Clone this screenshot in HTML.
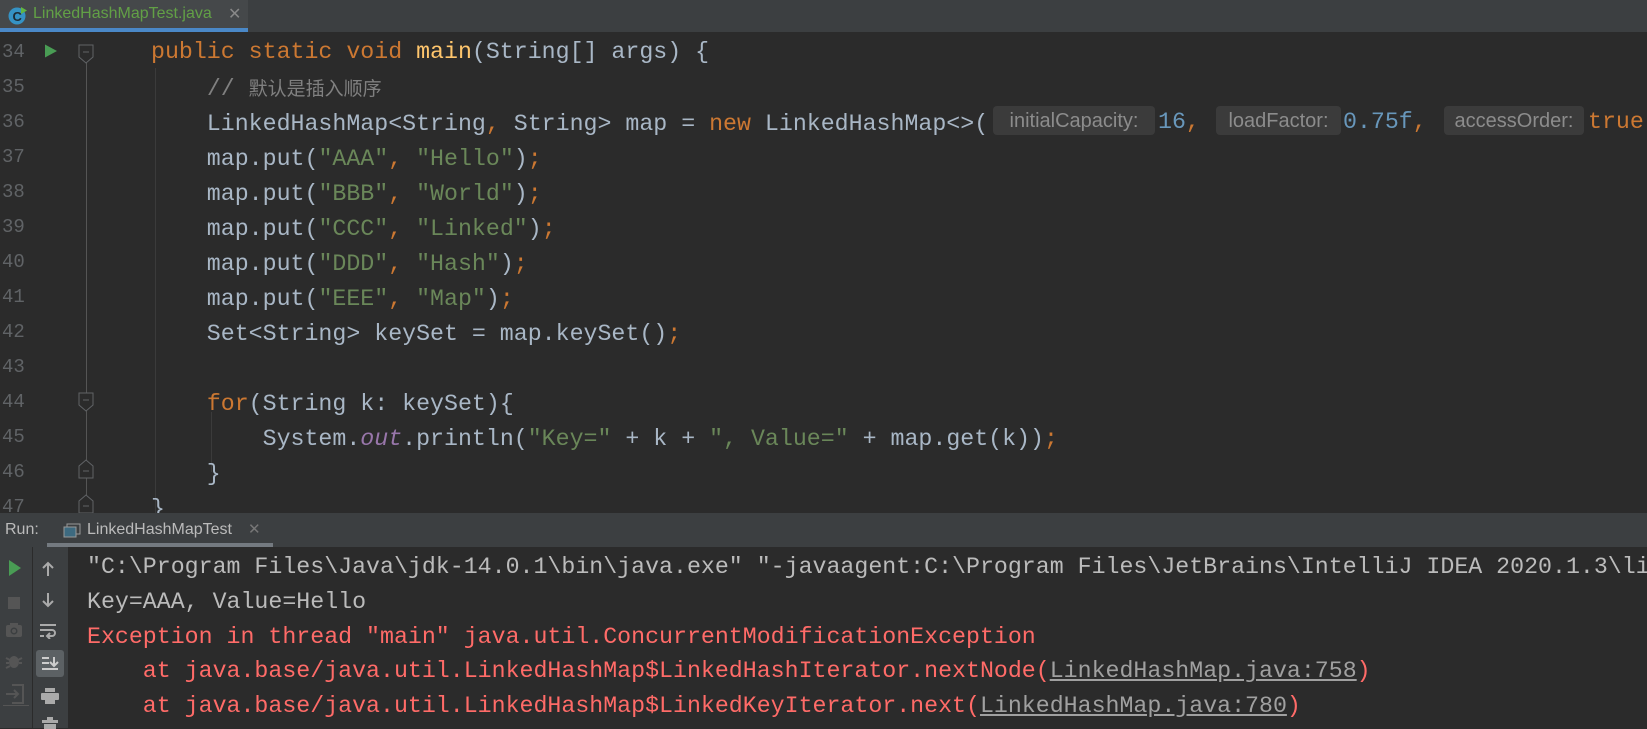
<!DOCTYPE html>
<html><head><meta charset="utf-8"><style>
*{margin:0;padding:0;box-sizing:border-box}
body{width:1647px;height:728px;overflow:hidden;background:#2b2b2b;font-family:"Liberation Mono",monospace;position:relative}
.tabbar{position:absolute;left:0;top:0;width:1647px;height:32px;background:#3c3f41}
.tab{position:absolute;left:0;top:0;width:248px;height:32px;background:#45484a;border-bottom:4px solid #4a88c7;}
.tab span{position:absolute;left:33px;top:5px;font:16px "Liberation Sans",sans-serif;color:#62a046}
.tab .x{left:228px;color:#888;top:4px}
.ed{position:absolute;left:0;top:32px;width:1647px;height:481px;overflow:hidden}
.ln{position:absolute;left:0;width:40px;font-size:19px;color:#606366;padding-left:2px;line-height:35px}
.code{position:absolute;font-size:23.25px;color:#a9b7c6;white-space:pre;line-height:35px}
.k{color:#cc7832}.m{color:#ffc66d}.s{color:#6a8759}.n{color:#6897bb}.c{color:#808080}.f{color:#9876aa;font-style:italic}
.h{position:absolute;top:1px;height:29px;background:#3b3b3b;color:#8c8c8c;font:20px/31px "Liberation Sans",sans-serif;border-radius:4px;text-align:center;white-space:nowrap;overflow:hidden}
.run{position:absolute;left:0;top:513px;width:1647px;height:34px;background:#3c3f41}
.con{position:absolute;left:0;top:547px;width:1647px;height:181px;background:#2b2b2b}
.cl{position:absolute;left:87px;font-size:23.25px;white-space:pre;color:#bbbbbb;line-height:34.8px}
.e{color:#ff6b68}.u{color:#a0a0a0;text-decoration:underline}
</style></head><body>
<div class="tabbar"><div class="tab">
<svg style="position:absolute;left:8px;top:6px" width="20" height="20"><circle cx="9" cy="10" r="8.5" fill="#3592c4"/><text x="4.5" y="15" font-size="13" font-family="Liberation Sans" font-weight="bold" fill="#1d2a33">C</text><path d="M13 1 L19 4.5 L13 8Z" fill="#62b543"/></svg>
<span>LinkedHashMapTest.java</span><span class="x">✕</span></div></div>
<div class="ed">
<div style="position:absolute;left:86px;top:30px;width:1px;height:451px;background:#555"></div>
<div style="position:absolute;left:155px;top:36px;width:1px;height:445px;background:#3b3b3b"></div>
<div style="position:absolute;left:211px;top:380px;width:1px;height:60px;background:#3b3b3b"></div>
<svg style="position:absolute;left:44px;top:12px" width="14" height="14"><path d="M1 0.5 L13 7 L1 13.5Z" fill="#499c54"/></svg>
<svg style="position:absolute;left:78px;top:12px" width="16" height="20"><path d="M1 1H15V13L8 19L1 13Z" fill="#2b2b2b" stroke="#606366"/><path d="M5 8H11" stroke="#606366"/></svg>
<svg style="position:absolute;left:78px;top:360px" width="16" height="20"><path d="M1 1H15V13L8 19L1 13Z" fill="#2b2b2b" stroke="#606366"/><path d="M5 8H11" stroke="#606366"/></svg>
<svg style="position:absolute;left:78px;top:427px" width="16" height="20"><path d="M1 19H15V7L8 1L1 7Z" fill="#2b2b2b" stroke="#606366"/><path d="M5 12H11" stroke="#606366"/></svg>
<svg style="position:absolute;left:78px;top:462px" width="16" height="20"><path d="M1 19H15V7L8 1L1 7Z" fill="#2b2b2b" stroke="#606366"/><path d="M5 12H11" stroke="#606366"/></svg>
<div class="ln" style="top:3px">34<br>35<br>36<br>37<br>38<br>39<br>40<br>41<br>42<br>43<br>44<br>45<br>46<br>47</div>
<div class="code" style="left:151px;top:3px"><span class="k">public static void </span><span class="m">main</span>(String[] args) {
    <span class="c">// <span style="font-family:'Noto Sans CJK SC',sans-serif;font-size:19px">默认是插入顺序</span></span>
    LinkedHashMap&lt;String<span class="k">, </span>String&gt; map = <span class="k">new </span>LinkedHashMap&lt;&gt;(
    map.put(<span class="s">"AAA"</span><span class="k">, </span><span class="s">"Hello"</span>)<span class="k">;</span>
    map.put(<span class="s">"BBB"</span><span class="k">, </span><span class="s">"World"</span>)<span class="k">;</span>
    map.put(<span class="s">"CCC"</span><span class="k">, </span><span class="s">"Linked"</span>)<span class="k">;</span>
    map.put(<span class="s">"DDD"</span><span class="k">, </span><span class="s">"Hash"</span>)<span class="k">;</span>
    map.put(<span class="s">"EEE"</span><span class="k">, </span><span class="s">"Map"</span>)<span class="k">;</span>
    Set&lt;String&gt; keySet = map.keySet()<span class="k">;</span>

    <span class="k">for</span>(String k: keySet){
        System.<span class="f">out</span>.println(<span class="s">"Key="</span> + k + <span class="s">", Value="</span> + map.get(k))<span class="k">;</span>
    }
}</div>
<div style="position:absolute;left:0;top:73px;height:35px;width:1647px">
<div class="h" style="left:993px;width:162px">initialCapacity:</div>
<div class="code" style="left:1158px;top:0"><span class="n">16</span><span class="k">,</span></div>
<div class="h" style="left:1216px;width:125px">loadFactor:</div>
<div class="code" style="left:1343px;top:0"><span class="n">0.75f</span><span class="k">,</span></div>
<div class="h" style="left:1444px;width:140px">accessOrder:</div>
<div class="code" style="left:1588px;top:0"><span class="k">true</span>);</div>
</div>
</div>
<div class="run">
<span style="position:absolute;left:5px;top:8px;font:16px 'Liberation Sans',sans-serif;color:#bbb">Run:</span>
<svg style="position:absolute;left:63px;top:10px" width="18" height="15"><rect x="4" y="1" width="13" height="10" fill="none" stroke="#999"/><rect x="1" y="4" width="12" height="10" fill="#3d6a80" stroke="#999"/></svg>
<span style="position:absolute;left:87px;top:8px;font:16px 'Liberation Sans',sans-serif;color:#bbb">LinkedHashMapTest</span>
<span style="position:absolute;left:248px;top:7px;font:15px 'Liberation Sans',sans-serif;color:#777">✕</span>
<div style="position:absolute;left:47px;top:30px;width:226px;height:4px;background:#747a80"></div>
</div>
<div class="con">
<div style="position:absolute;left:0;top:0;width:68px;height:181px;background:#3c3f41"></div>
<div style="position:absolute;left:32px;top:0;width:1px;height:181px;background:#2b2b2b"></div>
<svg style="position:absolute;left:8px;top:12px" width="14" height="18"><path d="M1 1L13 9L1 17Z" fill="#499c54"/></svg>
<div style="position:absolute;left:8px;top:50px;width:12px;height:12px;background:#555"></div>
<svg style="position:absolute;left:5px;top:75px" width="18" height="16"><rect x="1" y="3" width="16" height="12" rx="2" fill="#555"/><rect x="5" y="1" width="8" height="4" fill="#555"/><circle cx="9" cy="9" r="3.5" fill="#3c3f41"/><circle cx="9" cy="9" r="2" fill="#555"/></svg>
<svg style="position:absolute;left:5px;top:105px" width="20" height="18"><ellipse cx="9" cy="10" rx="5" ry="6" fill="#555"/><path d="M1 6L5 8M1 11H4M1 16L5 14M17 6L13 8M17 11H14" stroke="#555" stroke-width="2"/></svg>
<svg style="position:absolute;left:5px;top:137px" width="20" height="20"><path d="M7 1H18V19H7" fill="none" stroke="#555" stroke-width="2"/><path d="M1 10H12M9 6L13 10L9 14" fill="none" stroke="#555" stroke-width="2"/></svg>
<div style="position:absolute;left:3px;top:158px;width:26px;height:1px;background:#555"></div>
<svg style="position:absolute;left:40px;top:14px" width="16" height="16"><path d="M8 15V2M3 7L8 2L13 7" fill="none" stroke="#aaa" stroke-width="2"/></svg>
<svg style="position:absolute;left:40px;top:45px" width="16" height="16"><path d="M8 1V14M3 9L8 14L13 9" fill="none" stroke="#aaa" stroke-width="2"/></svg>
<svg style="position:absolute;left:39px;top:76px" width="18" height="16"><path d="M1 2H17M1 7H13a3 3 0 010 6H9M11 10L8 13L11 16M1 13H5" fill="none" stroke="#aaa" stroke-width="2"/></svg>
<div style="position:absolute;left:36px;top:103px;width:28px;height:27px;background:#5c6164;border-radius:3px"></div>
<svg style="position:absolute;left:41px;top:108px" width="18" height="18"><path d="M1 3H8M1 8H8M1 14H17M13 2V11M9 7L13 11L17 7" fill="none" stroke="#ccc" stroke-width="2"/></svg>
<svg style="position:absolute;left:40px;top:140px" width="20" height="18"><rect x="5" y="1" width="10" height="4" fill="#aaa"/><rect x="1" y="6" width="18" height="7" rx="1" fill="#aaa"/><rect x="5" y="11" width="10" height="6" fill="#aaa"/></svg>
<svg style="position:absolute;left:41px;top:170px" width="18" height="12"><rect x="6" y="0" width="6" height="3" fill="#aaa"/><rect x="1" y="3" width="16" height="3" fill="#aaa"/><rect x="3" y="7" width="12" height="6" fill="#aaa"/></svg>
<div class="cl" style="top:3px">"C:\Program Files\Java\jdk-14.0.1\bin\java.exe" "-javaagent:C:\Program Files\JetBrains\IntelliJ IDEA 2020.1.3\lib
Key=AAA, Value=Hello
<span class="e">Exception in thread "main" java.util.ConcurrentModificationException</span>
<span class="e">    at java.base/java.util.LinkedHashMap$LinkedHashIterator.nextNode(<span class="u">LinkedHashMap.java:758</span>)</span>
<span class="e">    at java.base/java.util.LinkedHashMap$LinkedKeyIterator.next(<span class="u">LinkedHashMap.java:780</span>)</span></div>
</div>
</body></html>
